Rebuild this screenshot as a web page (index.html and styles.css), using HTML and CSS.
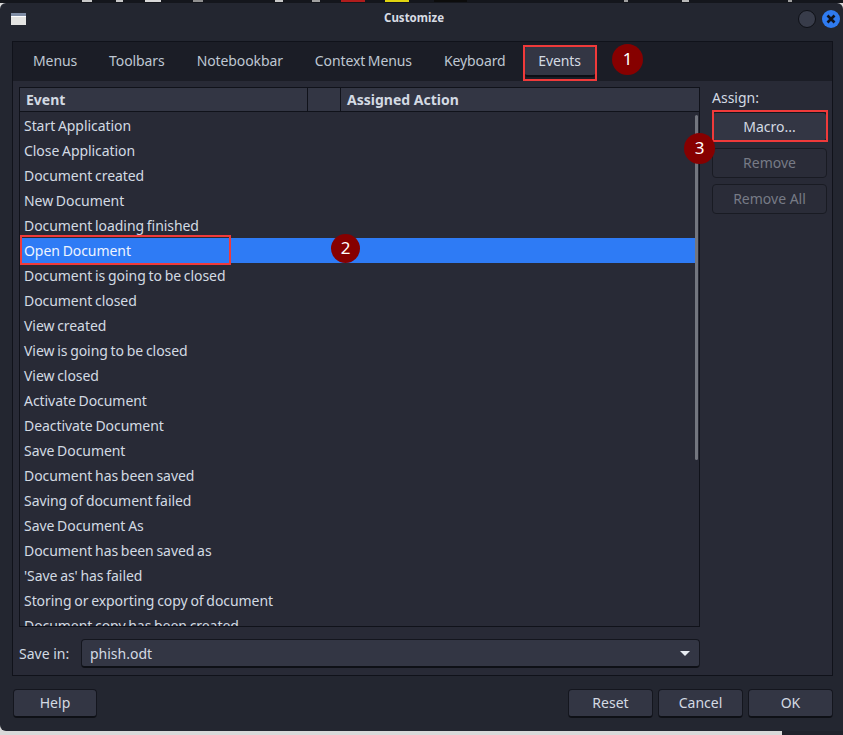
FILE: index.html
```html
<!DOCTYPE html>
<html lang="en">
<head>
<meta charset="utf-8">
<title>Customize</title>
<link rel="stylesheet" href="styles.css">
</head>
<body>
<div class="topstrip">
  <span class="chip chip-a"></span><span class="chip chip-b"></span><span class="chip chip-c"></span><span class="chip chip-d"></span><span class="chip chip-e"></span><span class="chip chip-f"></span><span class="chip chip-red"></span><span class="chip chip-yellow"></span><span class="chip chip-g"></span><span class="chip chip-h"></span><span class="chip chip-i"></span><span class="chip chip-j"></span>
</div>
<div class="window">
  <header class="titlebar">
    <svg class="appicon" width="15" height="12" viewBox="0 0 15 12"><rect width="15" height="12" fill="#e4e4e2"/><rect width="15" height="3" fill="#7f8da5"/><rect y="3" width="15" height="1" fill="#fff"/></svg>
    <span class="title">Customize</span>
    <div class="winbtns">
      <span class="winbtn-min"></span>
      <span class="winbtn-close"><svg width="18" height="18" viewBox="0 0 18 18"><path d="M5.5 5.5l7 7M12.5 5.5l-7 7" stroke="#10131c" stroke-width="2.6" fill="none"/></svg></span>
    </div>
  </header>
  <section class="panel">
    <nav class="tabs">
      <span class="tab">Menus</span>
      <span class="tab">Toolbars</span>
      <span class="tab">Notebookbar</span>
      <span class="tab">Context Menus</span>
      <span class="tab">Keyboard</span>
      <span class="tab tab-active">Events</span>
    </nav>
    <div class="content">
      <div class="main">
        <div class="listbox">
          <div class="listhead">
            <span class="col col-event">Event</span>
            <span class="col col-mid"></span>
            <span class="col col-action">Assigned Action</span>
          </div>
          <div class="rows">
            <div class="row">Start Application</div>
            <div class="row">Close Application</div>
            <div class="row">Document created</div>
            <div class="row">New Document</div>
            <div class="row">Document loading finished</div>
            <div class="row row-sel">Open Document</div>
            <div class="row">Document is going to be closed</div>
            <div class="row">Document closed</div>
            <div class="row">View created</div>
            <div class="row">View is going to be closed</div>
            <div class="row">View closed</div>
            <div class="row">Activate Document</div>
            <div class="row">Deactivate Document</div>
            <div class="row">Save Document</div>
            <div class="row">Document has been saved</div>
            <div class="row">Saving of document failed</div>
            <div class="row">Save Document As</div>
            <div class="row">Document has been saved as</div>
            <div class="row">'Save as' has failed</div>
            <div class="row">Storing or exporting copy of document</div>
            <div class="row">Document copy has been created</div>
            <span class="scrollthumb"></span>
          </div>
        </div>
        <div class="savein">
          <span class="savelabel">Save in:</span>
          <div class="select"><span>phish.odt</span><span class="caret"></span></div>
        </div>
      </div>
      <aside class="side">
        <span class="assign">Assign:</span>
        <span class="btn side-btn">Macro...</span>
        <span class="btn side-btn btn-off">Remove</span>
        <span class="btn side-btn btn-off">Remove All</span>
      </aside>
    </div>
  </section>
  <footer class="footer">
    <span class="btn foot-btn foot-help">Help</span>
    <span class="spacer"></span>
    <span class="btn foot-btn">Reset</span>
    <span class="btn foot-btn">Cancel</span>
    <span class="btn foot-btn">OK</span>
  </footer>
</div>
<div class="bottomstrip"></div>

<span class="mark mark-events"></span>
<span class="mark mark-open"></span>
<span class="mark mark-macro"></span>
<span class="badge badge-1">1</span>
<span class="badge badge-2">2</span>
<span class="badge badge-3">3</span>
</body>
</html>
```
FILE: styles.css
```css
* { box-sizing: border-box; }
html, body { margin: 0; padding: 0; }
body {
  position: relative;
  width: 843px;
  height: 735px;
  overflow: hidden;
  background: #d9d9d9;
  font-family: "Noto Sans", "Open Sans", sans-serif;
  font-size: 14px;
  color: #d3dae3;
}
.topstrip {
  height: 3px;
  background: #14161c;
  display: flex;
  overflow: hidden;
}
.chip { height: 2px; display: block; }
.chip-a { margin-left: 82px; width: 10px; background: #c8c8c8; }
.chip-b { margin-left: 24px; width: 7px; background: #c8c8c8; }
.chip-c { margin-left: 22px; width: 16px; background: #d8d8d8; }
.chip-d { margin-left: 32px; width: 10px; background: #909090; }
.chip-e { margin-left: 72px; width: 8px; background: #c8c8c8; }
.chip-f { margin-left: 29px; width: 8px; background: #a0a0a0; }
.chip-red { margin-left: 21px; width: 24px; background: #b01c1c; }
.chip-yellow { margin-left: 20px; width: 24px; background: #e0d410; }
.chip-g { margin-left: 25px; width: 33px; background: #0c0c0c; }
.chip-h { margin-left: 157px; width: 4px; background: #a0a0a0; }
.chip-i { margin-left: 54px; width: 7px; background: #b8b8b8; }
.chip-j { margin-left: 99px; width: 4px; background: #a0a0a0; }
.window {
  height: 728px;
  background: #232630;
  border-radius: 6px 6px 0 6px;
  padding: 0 10px 0 12px;
  display: flex;
  flex-direction: column;
}
.titlebar {
  height: 38px;
  padding-bottom: 6px;
  display: grid;
  grid-template-columns: 1fr auto 1fr;
  align-items: center;
  margin-left: -1px;
}
.appicon { display: block; }
.title { font-size: 11.5px; line-height: 14px; font-weight: 700; color: #d8dce4; margin: 0 16px 2px 0; }
.winbtns { display: flex; justify-content: flex-end; gap: 6px; margin-right: -7px; align-items: center; }
.winbtn-min {
  width: 18px; height: 18px; border-radius: 50%;
  background: #383c4a; border: 1px solid #0e1016;
}
.winbtn-close {
  width: 18px; height: 18px; border-radius: 50%;
  background: #2f7bf0;
  display: block;
}
.winbtn-close svg { display: block; }
.panel {
  height: 635px;
  border: 1px solid #10121a;
  display: flex;
  flex-direction: column;
  background: #282a36;
}
.tabs {
  height: 39px;
  flex: none;
  background: #1b1d26;
  display: flex;
  align-items: center;
  padding-left: 4px;
  letter-spacing: -0.1px;
  word-spacing: -1px;
}
.tab {
  height: 31px;
  line-height: 30px;
  padding: 0 16px;
  color: #bfc7d2;
  font-size: 14px;
}
.tab-active {
  width: 70px;
  padding: 0;
  text-align: center;
  background: #333644;
  border-radius: 3px;
  border-bottom: 2px solid #0c0e14;
  margin-left: 3px;
  color: #d3dae3;
}
.content {
  flex: 1;
  display: flex;
  padding: 6px 6px 7px 6px;
  min-height: 0;
}
.main {
  width: 681px;
  flex: none;
  display: flex;
  flex-direction: column;
}
.listbox {
  height: 540px;
  border: 1px solid #10121a;
  background: #282a36;
  overflow: hidden;
  display: flex;
  flex-direction: column;
}
.listhead {
  height: 24px;
  flex: none;
  display: flex;
  background: #333644;
  border-bottom: 1px solid #10121a;
  font-weight: 700;
  font-size: 14px;
  line-height: 23px;
}
.col { display: block; }
.col-event { width: 288px; padding-left: 6px; border-right: 1px solid #10121a; }
.col-mid { width: 33px; border-right: 1px solid #10121a; }
.col-action { flex: 1; padding-left: 6px; }
.rows {
  position: relative;
  flex: 1;
  padding-top: 1px;
  overflow: hidden;
}
.row {
  height: 25px;
  line-height: 25px;
  padding-left: 4px;
  white-space: nowrap;
  color: #d3dae3;
  letter-spacing: -0.06px;
  word-spacing: -0.8px;
}
.row-sel { background: #2e7bf5; color: #eef4ff; margin-right: 2px; }
.scrollthumb {
  position: absolute;
  right: 1px;
  top: 3px;
  width: 3px;
  height: 345px;
  border-radius: 2px;
  background: #73767f;
}
.savein {
  margin-top: 12px;
  display: flex;
  align-items: center;
  height: 29px;
}
.savelabel { width: 62px; flex: none; }
.select {
  flex: 1;
  height: 29px;
  background: #333644;
  border: 1px solid #14161e;
  border-bottom: 2px solid #0e1016;
  border-radius: 4px;
  padding: 1px 9px 0 8px;
  line-height: 26px;
  display: flex;
  justify-content: space-between;
  align-items: center;
}
.caret {
  width: 0; height: 0;
  border-left: 5px solid transparent;
  border-right: 5px solid transparent;
  border-top: 5px solid #e8ecf2;
}
.side {
  flex: 1;
  padding-left: 12px;
  display: flex;
  flex-direction: column;
}
.assign { height: 25px; line-height: 21px; color: #d3dae3; }
.btn {
  display: block;
  background: #333644;
  border: 1px solid #14161e;
  border-bottom: 2px solid #0e1016;
  border-radius: 4px;
  text-align: center;
  color: #d3dae3;
}
.side-btn { width: 115px; height: 30px; line-height: 27px; margin-bottom: 6px; }
.btn-off {
  background: #2a2c38;
  border: 1px solid #191b23;
  color: #777b86;
}
.footer {
  display: flex;
  margin-top: 13px;
  padding-left: 1px;
  gap: 5px;
}
.spacer { flex: 1; }
.foot-btn { width: 85px; height: 29px; line-height: 26px; }
.foot-help { width: 84px; }
.bottomstrip {
  height: 4px;
  background: linear-gradient(to right, #d9d9d9 782px, #20222b 782px);
}
.mark {
  position: absolute;
  border: 2px solid #f03a3a;
  pointer-events: none;
}
.mark-events { left: 523px; top: 45px; width: 74px; height: 36px; }
.mark-open { left: 20px; top: 235px; width: 211px; height: 30px; }
.mark-macro { left: 712px; top: 110px; width: 116px; height: 32px; }
.badge {
  position: absolute;
  width: 31px;
  height: 31px;
  border-radius: 50%;
  background: #860000;
  color: #fff;
  font-size: 17px;
  line-height: 30px;
  text-align: center;
}
.badge-1 { left: 612px; top: 44px; }
.badge-2 { left: 331px; top: 234px; width: 29px; height: 29px; line-height: 28px; }
.badge-3 { left: 684px; top: 133px; }
```
